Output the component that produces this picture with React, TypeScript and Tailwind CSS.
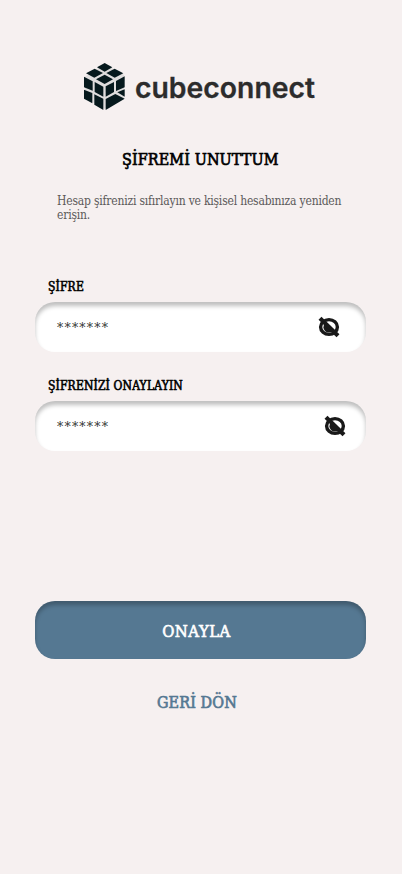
import React from "react";

const slab = "font-['DejaVu_Serif_Condensed','DejaVu_Serif',serif] [font-stretch:condensed]";

function Logo() {
  return (
    <svg className="block h-[60px] w-[250px]" viewBox="0 0 250 60" role="img" aria-label="cubeconnect">
      <g transform="scale(.33333)">
        <path d="M86 24 144 57V126L86 159 27 126V62Z" fill="#dfdddd" />
        <g fill="#06191d">
          <path d="M86 21 109 34 86 47 63 34Z" />
          <path d="M56 38 81 51 55 65 30 52Z" />
          <path d="M116 38 142 52 116 65 91 51Z" />
          <path d="M86 56 111 70 86 84 60 70Z" />
          <path d="M24 62 50 76V104L24 94Z" />
          <path d="M56 78 82 92V122L56 108Z" />
          <path d="M24 101 49 111V142L24 128Z" />
          <path d="M55 115 82 128V162L55 146Z" />
          <path d="M89 91 114 78V108L89 122Z" />
          <path d="M120 75 146 61V94L120 105Z" />
          <path d="M89 129 118 114 146 128 89 162Z" />
          <path d="M124 109 146 100V122Z" />
        </g>
      </g>
      <text x="59" y="42" textLength="180" lengthAdjust="spacingAndGlyphs" fill="#2c2c2c" stroke="#2c2c2c" strokeWidth=".3" className="font-[Inter,sans-serif] text-[28px] font-semibold">
        cubeconnect
      </text>
    </svg>
  );
}

function HiddenEye() {
  return (
    <svg className="block size-[22px]" viewBox="0 0 22 22" fill="none">
      <ellipse cx="11" cy="11" rx="8.4" ry="7.4" stroke="#191919" strokeWidth="3.4" />
      <path d="M7 7.5A5 5 0 0 0 14.5 15Z" fill="#191919" />
      <path d="M2 2.2 20 19.8" stroke="#191919" strokeWidth="4.2" />
    </svg>
  );
}

function Field({ label, iconClass }: { label: string; iconClass: string }) {
  return (
    <div>
      <div className="ml-[13px] h-[24px] whitespace-nowrap pt-px text-[12px] leading-4 tracking-[.15px] text-black [-webkit-text-stroke:.55px_black]">{label}</div>
      <div className={`flex h-[50px] items-center justify-between rounded-[20px] bg-white pl-[22px] shadow-[inset_0_4px_4px_rgba(0,0,0,0.25)] ${iconClass}`}>
        <span className="pt-[3px] font-['DejaVu_Serif',serif] text-[12.5px] leading-none tracking-[1.2px] text-[#333] [font-stretch:normal]">*******</span>
        <HiddenEye />
      </div>
    </div>
  );
}

export default function App() {
  return (
    <main className={`h-[874px] w-[402px] overflow-hidden bg-[#f6f0f0] pt-[56px] ${slab}`}>
      <div className="ml-[76px]"><Logo /></div>
      <h1 className="ml-[122px] mt-[32px] whitespace-nowrap text-[16px] leading-6 tracking-[.1px] text-black [-webkit-text-stroke:.65px_black]">ŞİFREMİ UNUTTUM</h1>
      <p className="ml-[57px] mt-[22px] h-[28px] whitespace-nowrap text-[12px] leading-[14px] tracking-[-.2px] text-[#5c5a5a]">
        Hesap şifrenizi sıfırlayın ve kişisel hesabınıza yeniden<br />erişin.
      </p>
      <section className="ml-[35px] mt-[56px] flex w-[331px] flex-col gap-[25px]">
        <Field label="ŞİFRE" iconClass="pr-[26px]" />
        <Field label="ŞİFRENİZİ ONAYLAYIN" iconClass="pr-[20px]" />
      </section>
      <button className="ml-[35px] mt-[150px] flex h-[58px] w-[331px] items-center justify-center rounded-[20px] bg-[#557892] pt-[4px] pr-[8px] text-[16.5px] tracking-[.5px] text-white shadow-[inset_0_4px_4px_rgba(0,0,0,0.25)] [-webkit-text-stroke:.6px_white]">ONAYLA</button>
      <button className="ml-[157px] mt-[32px] block whitespace-nowrap text-[16px] leading-6 tracking-[.1px] text-[#557892] [-webkit-text-stroke:.65px_#557892]">GERİ DÖN</button>
    </main>
  );
}
